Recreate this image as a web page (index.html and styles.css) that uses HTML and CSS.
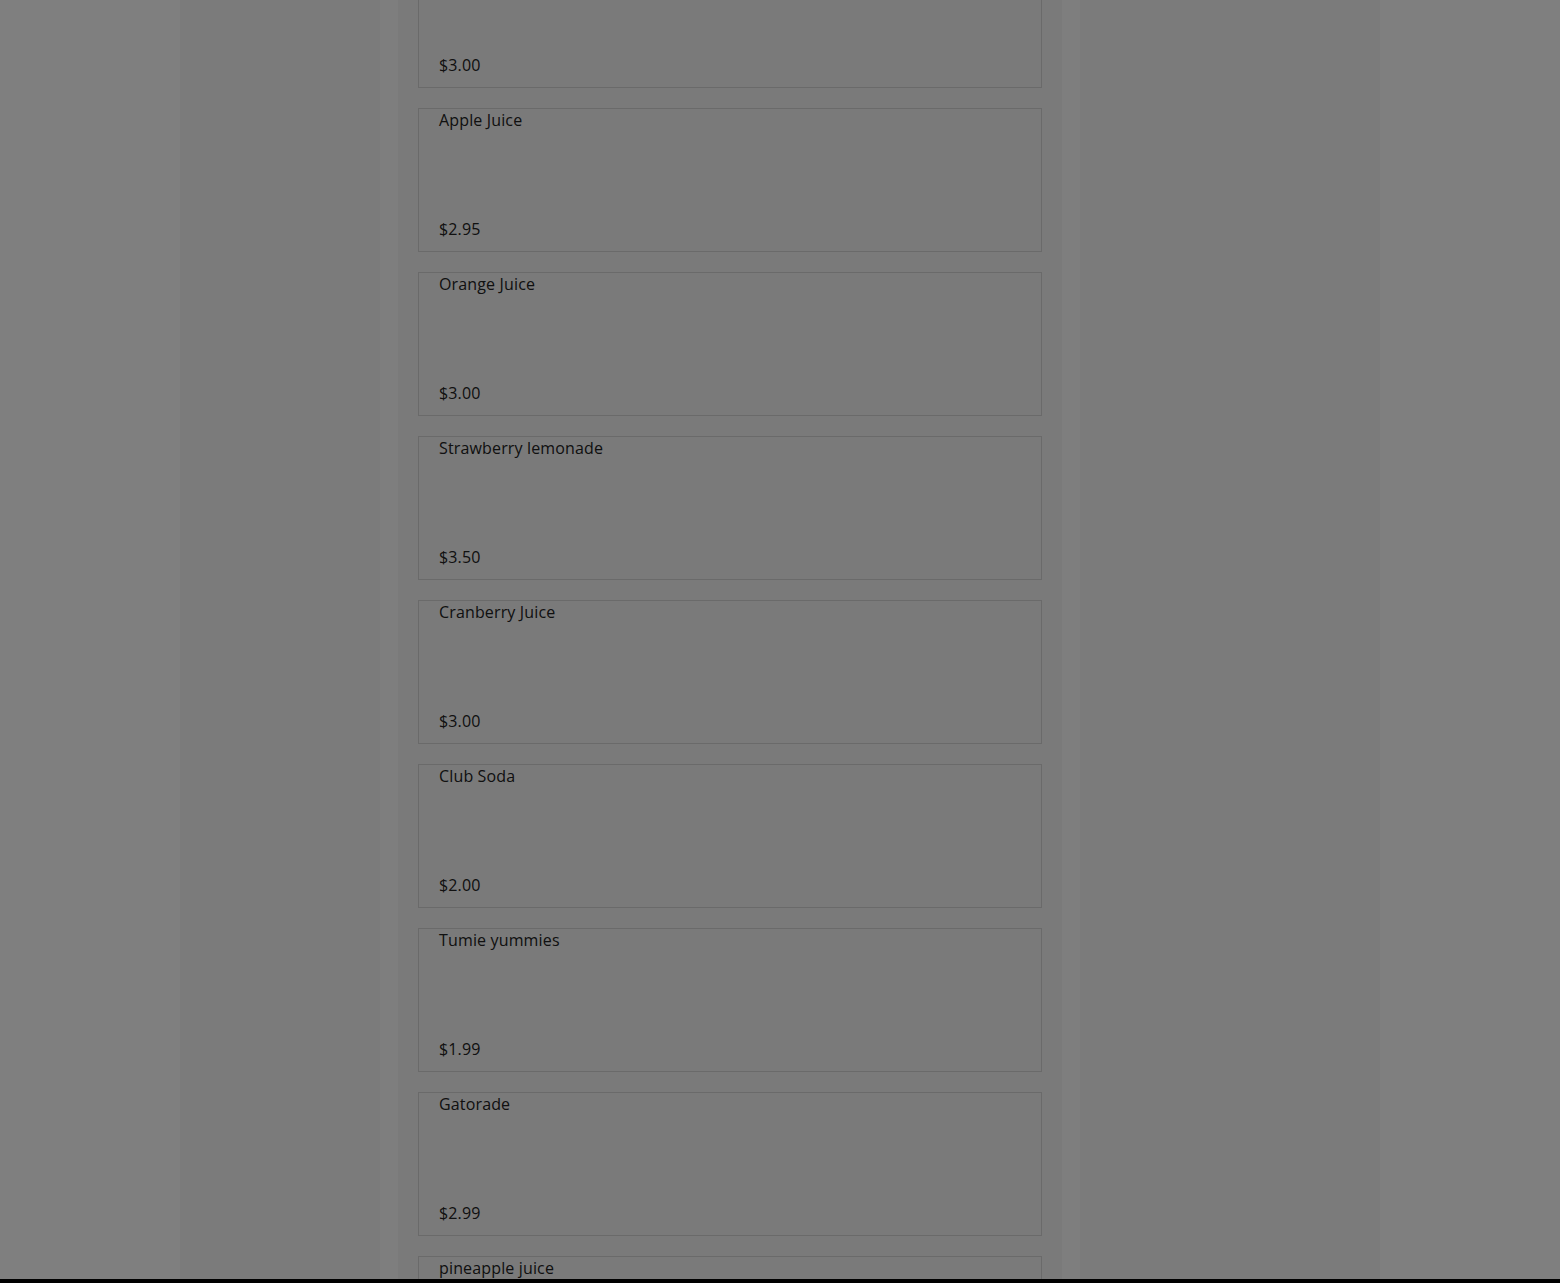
FILE: index.html
```html
<!DOCTYPE html>
<html lang="en">
<head>
  <meta charset="UTF-8">
  <meta name="viewport" content="width=device-width, initial-scale=1.0">
  <title>Menu</title>
  <link rel="stylesheet" href="styles.css">
</head>
<body>
  <div class="layout">
    <aside class="sidebar left"></aside>
    <div class="gutter"></div>
    <main class="menu">
      <div class="item">
        <p class="name">Iced Tea</p>
        <p class="price">$3.00</p>
      </div>
      <div class="item">
        <p class="name">Apple Juice</p>
        <p class="price">$2.95</p>
      </div>
      <div class="item">
        <p class="name">Orange Juice</p>
        <p class="price">$3.00</p>
      </div>
      <div class="item">
        <p class="name">Strawberry lemonade</p>
        <p class="price">$3.50</p>
      </div>
      <div class="item">
        <p class="name">Cranberry Juice</p>
        <p class="price">$3.00</p>
      </div>
      <div class="item">
        <p class="name">Club Soda</p>
        <p class="price">$2.00</p>
      </div>
      <div class="item">
        <p class="name">Tumie yummies</p>
        <p class="price">$1.99</p>
      </div>
      <div class="item">
        <p class="name">Gatorade</p>
        <p class="price">$2.99</p>
      </div>
      <div class="item">
        <p class="name">pineapple juice</p>
        <p class="price">$3.25</p>
      </div>
    </main>
    <div class="gutter"></div>
    <aside class="sidebar right"></aside>
  </div>

  <div class="backdrop"></div>
  <div class="bottom-bar"></div>
</body>
</html>
```

FILE: styles.css
```css
* {
  box-sizing: border-box;
  margin: 0;
  padding: 0;
}

html, body {
  height: 100%;
  overflow: hidden;
}

body {
  font-family: 'Open Sans', 'Liberation Sans', sans-serif;
  background-color: #ffffff;
  color: #222222;
}

.layout {
  display: grid;
  grid-template-columns: 200px 18px 664px 18px 300px;
  justify-content: center;
  min-height: 100%;
}

.sidebar {
  background-color: #f6f6f6;
}

.gutter {
  background-color: #fcfcfc;
}

.menu {
  background-color: #f4f4f4;
  display: flex;
  flex-direction: column;
  gap: 20px;
  padding: 0 20px;
  margin-top: -56px;
}

.item {
  height: 144px;
  border: 1px solid #d4d4d4;
  display: flex;
  flex-direction: column;
  justify-content: space-between;
  padding: 1px 20px 12px;
  font-size: 16px;
  line-height: 20px;
  letter-spacing: 0.15px;
}

.backdrop {
  position: fixed;
  inset: 0;
  background-color: rgba(0, 0, 0, 0.5);
}

.bottom-bar {
  position: fixed;
  left: 0;
  right: 0;
  bottom: 0;
  height: 4px;
  background-color: #000000;
}
```
